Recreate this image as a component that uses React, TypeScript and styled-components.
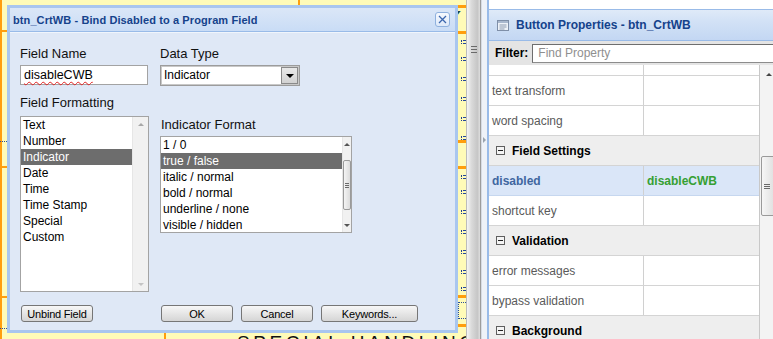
import React from 'react';
import styled, { createGlobalStyle } from 'styled-components';

const GlobalStyle = createGlobalStyle`
  html, body { margin: 0; padding: 0; }
  body { font-family: "Liberation Sans", Arial, sans-serif; background: #ffffff; }
  * { box-sizing: border-box; }
`;

const Screen = styled.div`
  display: flex;
  width: 773px;
  height: 339px;
  overflow: hidden;
`;

/* ---------- designer canvas behind the dialog ---------- */

const Canvas = styled.div`
  position: relative;
  flex: none;
  width: 466px;
  height: 339px;
  background: #fffbb8;
  overflow: hidden;
`;

const OrangeBar = styled.div<{ $x: number; $y: number; $w: number; $h: number }>`
  position: absolute;
  left: ${(p) => p.$x}px;
  top: ${(p) => p.$y}px;
  width: ${(p) => p.$w}px;
  height: ${(p) => p.$h}px;
  background: #ff9e0d;
`;

const DottedRule = styled.div<{ $x: number; $y: number; $w: number }>`
  position: absolute;
  left: ${(p) => p.$x}px;
  top: ${(p) => p.$y}px;
  width: ${(p) => p.$w}px;
  border-top: 1px dotted #2a4f9a;
`;

const GuideMark = styled.div<{ $y: number }>`
  position: absolute;
  left: 461px;
  top: ${(p) => p.$y}px;
  width: 5px;
  height: 4px;
  border-left: 1px dotted #1f3f90;
  &::before, &::after {
    content: '';
    position: absolute;
    left: 1px;
    width: 3px;
    height: 1px;
    background: #24469a;
  }
  &::before { top: 0; }
  &::after { top: 3px; }
`;

const GuideBox = styled.div`
  position: absolute;
  left: 458px;
  top: 302px;
  width: 8px;
  height: 17px;
  border: 1px dotted #2a4f9a;
  border-right: none;
`;

const CanvasLetter = styled.div`
  position: absolute;
  left: 448px;
  top: 8px;
  font: italic bold 17px "Liberation Sans", sans-serif;
  color: #17404a;
`;

const CaptionText = styled.div`
  position: absolute;
  left: 237px;
  top: 332px;
  font: 19px "Liberation Sans", sans-serif;
  letter-spacing: 3.6px;
  color: #111111;
  white-space: nowrap;
`;

/* ---------- dialog ---------- */

const Dialog = styled.div`
  position: absolute;
  left: 7px;
  top: 5px;
  width: 451px;
  height: 328px;
  z-index: 2;
  display: flex;
  flex-direction: column;
  border: 3px solid #a9c6ef;
  background: #dfe8f6;
`;

const TitleBar = styled.div`
  flex: none;
  height: 24px;
  display: flex;
  align-items: center;
  justify-content: space-between;
  padding: 0 5px 0 3px;
  background: linear-gradient(#dbe7f7, #c9dcf6);
  border-bottom: 1px solid #99bbe8;
  box-shadow: 0 1px 0 #f0f5fc;
`;

const TitleText = styled.span`
  font: bold 11px "Liberation Sans", Arial, sans-serif;
  letter-spacing: 0.1px;
  color: #15428b;
`;

const CloseButton = styled.div`
  width: 15px;
  height: 15px;
  display: flex;
  align-items: center;
  justify-content: center;
  border: 1px solid #8fb1de;
  border-radius: 3px;
  background: linear-gradient(#f6f9fe, #dde9f9);
`;

const DialogBody = styled.div`
  flex: 1;
  display: flex;
  flex-direction: column;
  padding: 14px 10px 0 10px;
`;

const Columns = styled.div`
  display: flex;
  gap: 11px;
`;

const Column = styled.div<{ $w?: number }>`
  display: flex;
  flex-direction: column;
  width: ${(p) => (p.$w ? `${p.$w}px` : 'auto')};
`;

const Label = styled.div<{ $mt?: number; $indent?: number }>`
  height: 15px;
  margin-top: ${(p) => p.$mt ?? 0}px;
  margin-bottom: 4px;
  padding-left: ${(p) => p.$indent ?? 0}px;
  font: 13px/15px "Liberation Sans", Arial, sans-serif;
  color: #111111;
`;

const TextInput = styled.div`
  width: 128px;
  height: 20px;
  padding: 0 3px;
  background: #ffffff;
  border: 1px solid #a3a3a3;
  font: 12.5px/18px "Liberation Sans", Arial, sans-serif;
  color: #000000;
`;

const Squiggle = styled.span`
  text-decoration: underline wavy #e02020;
  text-decoration-thickness: 1px;
  text-underline-offset: 2px;
`;

const SelectBox = styled.div`
  width: 140px;
  height: 21px;
  display: flex;
  align-items: stretch;
  background: #ffffff;
  border: 1px solid #9c9c9c;
  box-shadow: inset 0 0 0 1px #c8c8c8;
`;

const SelectValue = styled.div`
  flex: 1;
  padding: 0 3px;
  font: 12px/19px "Liberation Sans", Arial, sans-serif;
  color: #000000;
`;

const SelectArrow = styled.div`
  width: 17px;
  margin: 1px;
  display: flex;
  align-items: center;
  justify-content: center;
  background: linear-gradient(#e8e8e8, #d2d2d2);
  border: 1px solid #8a8a8a;
  &::after {
    content: '';
    border-left: 4px solid transparent;
    border-right: 4px solid transparent;
    border-top: 4px solid #000000;
  }
`;

const ListBox = styled.div<{ $w: number; $h: number; $mt: number }>`
  width: ${(p) => p.$w}px;
  height: ${(p) => p.$h}px;
  margin-top: ${(p) => p.$mt}px;
  display: flex;
  background: #ffffff;
  border: 1px solid #a3a3a3;
  overflow: hidden;
`;

const ListItems = styled.div`
  flex: 1;
  display: flex;
  flex-direction: column;
`;

const ListItem = styled.div<{ $selected?: boolean }>`
  flex: none;
  height: 16px;
  padding-left: 2px;
  font: 12px/16px "Liberation Sans", Arial, sans-serif;
  white-space: nowrap;
  color: ${(p) => (p.$selected ? '#ffffff' : '#000000')};
  background: ${(p) => (p.$selected ? '#6d6d6d' : 'transparent')};
`;

const ListScroll = styled.div<{ $w: number }>`
  flex: none;
  width: ${(p) => p.$w}px;
  display: flex;
  flex-direction: column;
  align-items: center;
  justify-content: space-between;
  padding: 6px 0 5px;
  background: #f1f1f1;
  border-left: 1px solid #e6e6e6;
`;

const ArrowUp = styled.div<{ $c?: string }>`
  border-left: 3px solid transparent;
  border-right: 3px solid transparent;
  border-bottom: 3px solid ${(p) => p.$c ?? '#a8a8a8'};
`;

const ArrowDown = styled.div<{ $c?: string }>`
  border-left: 3px solid transparent;
  border-right: 3px solid transparent;
  border-top: 3px solid ${(p) => p.$c ?? '#a8a8a8'};
`;

const ListThumb = styled.div`
  width: 8px;
  height: 50px;
  display: flex;
  flex-direction: column;
  justify-content: center;
  align-items: center;
  gap: 1px;
  border: 1px solid #9a9a9a;
  border-radius: 2px;
  background: linear-gradient(to right, #f4f4f4, #dcdcdc);
`;

const GripLine = styled.div<{ $w: number }>`
  width: ${(p) => p.$w}px;
  height: 1px;
  background: #6a6a6a;
`;

const ButtonRow = styled.div`
  display: flex;
  margin-top: 13px;
  padding-left: 1px;
`;

const ButtonGroup = styled.div`
  display: flex;
  gap: 8px;
  margin-left: 68px;
`;

const DialogButton = styled.div<{ $w: number }>`
  width: ${(p) => p.$w}px;
  height: 17px;
  display: flex;
  align-items: center;
  justify-content: center;
  border: 1px solid #767676;
  border-radius: 3px;
  background: linear-gradient(#f7f7f7, #e6e6e6 50%, #d5d5d5);
  font: 11px "Liberation Sans", Arial, sans-serif;
  letter-spacing: -0.2px;
  color: #000000;
`;

/* ---------- splitter ---------- */

const Splitter = styled.div`
  flex: none;
  width: 15px;
  display: flex;
  flex-direction: column;
  align-items: center;
  gap: 2px;
  padding-top: 46px;
  background: linear-gradient(to right, #f5f5f5, #dadada 35%, #c6c6c6 80%, #dedede);
  border-left: 1px solid #bcbcbc;
  border-right: 1px solid #9c9c9c;
`;

const CollapseStrip = styled.div`
  flex: none;
  width: 6px;
  padding-top: 137px;
  background: #eef2f8;
  border-left: 1px solid #d6dbe3;
  &::after {
    content: '';
    display: block;
    margin-left: 1px;
    border-top: 3px solid transparent;
    border-bottom: 3px solid transparent;
    border-left: 3px solid #9aa3ae;
  }
`;

/* ---------- properties panel ---------- */

const Panel = styled.div`
  flex: 1;
  display: flex;
  flex-direction: column;
  min-width: 0;
  border-left: 2px solid #99bbe8;
  background: #ffffff;
`;

const PanelTop = styled.div`
  flex: none;
  height: 10px;
  background: #ffffff;
  border-bottom: 1px solid #99bbe8;
`;

const PanelHeader = styled.div`
  flex: none;
  height: 31px;
  display: flex;
  align-items: center;
  gap: 7px;
  padding-left: 8px;
  background: linear-gradient(#dfeaf8, #d3e2f6 35%, #c3d7f3);
  border-bottom: 1px solid #99bbe8;
`;

const PanelTitle = styled.span`
  font: bold 12px "Liberation Sans", Arial, sans-serif;
  color: #15428b;
`;

const FilterBar = styled.div`
  flex: none;
  height: 24px;
  display: flex;
  align-items: center;
  gap: 4px;
  padding-left: 6px;
  background: #e4e4e4;
`;

const FilterLabel = styled.span`
  font: bold 12px "Liberation Sans", Arial, sans-serif;
  color: #000000;
`;

const FilterInput = styled.div`
  flex: 1;
  height: 19px;
  padding-left: 5px;
  background: #ffffff;
  border: 1px solid #8c8c8c;
  border-top-color: #6e6e6e;
  border-left-color: #6e6e6e;
  border-right: none;
  font: 12px/17px "Liberation Sans", Arial, sans-serif;
  color: #8f8f8f;
`;

const GridArea = styled.div`
  flex: 1;
  display: flex;
  min-height: 0;
  background: #f2f2f2;
`;

const Grid = styled.div`
  flex: none;
  width: 271px;
  display: flex;
  flex-direction: column;
  background: #ffffff;
  border-right: 1px solid #c8c8c8;
`;

const PropRow = styled.div<{ $h?: number; $active?: boolean }>`
  flex: none;
  height: ${(p) => p.$h ?? 30}px;
  display: grid;
  grid-template-columns: 155px 1fr;
  background: ${(p) => (p.$active ? '#dae6f8' : '#ffffff')};
  border-bottom: 1px solid ${(p) => (p.$active ? '#c6d7ef' : '#d4d4d4')};
`;

const PropName = styled.div<{ $active?: boolean }>`
  display: flex;
  align-items: center;
  padding-left: 3px;
  border-right: 1px solid #d0d0d0;
  font: ${(p) => (p.$active ? 'bold ' : '')}12px "Liberation Sans", Arial, sans-serif;
  color: ${(p) => (p.$active ? '#3f66a0' : '#5a5a5a')};
  white-space: nowrap;
`;

const PropValue = styled.div`
  display: flex;
  align-items: center;
  padding-left: 3px;
  font: bold 12px "Liberation Sans", Arial, sans-serif;
  color: #36a033;
`;

const GroupRow = styled.div`
  flex: none;
  height: 30px;
  display: flex;
  align-items: center;
  gap: 7px;
  padding-left: 7px;
  background: #eeeeee;
  border-bottom: 1px solid #d4d4d4;
  font: bold 12px "Liberation Sans", Arial, sans-serif;
  color: #000000;
`;

const GridScroll = styled.div`
  flex: none;
  width: 17px;
  display: flex;
  flex-direction: column;
  align-items: center;
  padding-top: 8px;
  background: #f3f3f3;
`;

const GridThumb = styled.div`
  width: 15px;
  height: 60px;
  margin-top: 80px;
  display: flex;
  flex-direction: column;
  align-items: flex-start;
  justify-content: center;
  gap: 1px;
  padding-left: 2px;
  border: 1px solid #9a9a9a;
  border-radius: 2px;
  background: linear-gradient(to right, #f6f6f6, #dedede);
`;

const MinusBox = () => (
  <svg width="9" height="9" viewBox="0 0 9 9">
    <rect x="0.5" y="0.5" width="8" height="8" fill="#f4f4f4" stroke="#5e5e5e" />
    <line x1="2" y1="4.5" x2="7" y2="4.5" stroke="#222" />
  </svg>
);

const PanelIcon = () => (
  <svg width="12" height="11" viewBox="0 0 12 11">
    <rect x="0.5" y="0.5" width="11" height="10" fill="#eef2f8" stroke="#7f8fa8" />
    <rect x="1" y="1" width="10" height="2" fill="#a9b8ce" />
    <line x1="2.5" y1="5" x2="9.5" y2="5" stroke="#8d9bb0" />
    <line x1="2.5" y1="7" x2="9.5" y2="7" stroke="#8d9bb0" />
    <line x1="2.5" y1="9" x2="7.5" y2="9" stroke="#8d9bb0" />
  </svg>
);

const CloseIcon = () => (
  <svg width="9" height="9" viewBox="0 0 9 9">
    <path d="M1 1 L8 8 M8 1 L1 8" stroke="#3c67ae" strokeWidth="1.3" />
  </svg>
);

const formats = ['Text', 'Number', 'Indicator', 'Date', 'Time', 'Time Stamp', 'Special', 'Custom'];
const indicatorFormats = ['1 / 0', 'true / false', 'italic / normal', 'bold / normal', 'underline / none', 'visible / hidden'];
const guideMarks = [40, 57, 77, 97, 117, 136, 175, 190, 210, 230, 250, 270, 287];

export default function App() {
  return (
    <>
      <GlobalStyle />
      <Screen>
        <Canvas>
          <OrangeBar $x={0} $y={0} $w={2} $h={339} />
          <OrangeBar $x={2} $y={30} $w={5} $h={2} />
          <OrangeBar $x={2} $y={166} $w={5} $h={2} />
          <OrangeBar $x={2} $y={296} $w={5} $h={2} />
          <OrangeBar $x={298} $y={0} $w={2} $h={5} />
          <OrangeBar $x={458} $y={5} $w={8} $h={3} />
          <OrangeBar $x={458} $y={31} $w={8} $h={3} />
          <OrangeBar $x={458} $y={140} $w={8} $h={3} />
          <OrangeBar $x={458} $y={166} $w={8} $h={3} />
          <OrangeBar $x={458} $y={295} $w={8} $h={3} />
          <OrangeBar $x={458} $y={324} $w={8} $h={3} />
          <OrangeBar $x={164} $y={333} $w={2} $h={6} />
          <DottedRule $x={0} $y={141} $w={7} />
          <DottedRule $x={0} $y={328} $w={7} />
          {guideMarks.map((y) => (
            <GuideMark key={y} $y={y} />
          ))}
          <GuideBox />
          <CanvasLetter>Y</CanvasLetter>
          <CaptionText>SPECIAL HANDLING</CaptionText>

          <Dialog>
            <TitleBar>
              <TitleText>btn_CrtWB - Bind Disabled to a Program Field</TitleText>
              <CloseButton>
                <CloseIcon />
              </CloseButton>
            </TitleBar>
            <DialogBody>
              <Columns>
                <Column $w={129}>
                  <Label>Field Name</Label>
                  <TextInput>
                    <Squiggle>disableCWB</Squiggle>
                  </TextInput>
                  <Label $mt={10}>Field Formatting</Label>
                  <ListBox $w={129} $h={176} $mt={2}>
                    <ListItems>
                      {formats.map((f) => (
                        <ListItem key={f} $selected={f === 'Indicator'}>
                          {f}
                        </ListItem>
                      ))}
                    </ListItems>
                    <ListScroll $w={16}>
                      <ArrowUp />
                      <ArrowDown $c="#c4c4c4" />
                    </ListScroll>
                  </ListBox>
                </Column>
                <Column>
                  <Label>Data Type</Label>
                  <SelectBox>
                    <SelectValue>Indicator</SelectValue>
                    <SelectArrow />
                  </SelectBox>
                  <Label $mt={31} $indent={1}>Indicator Format</Label>
                  <ListBox $w={192} $h={97} $mt={0}>
                    <ListItems>
                      {indicatorFormats.map((f) => (
                        <ListItem key={f} $selected={f === 'true / false'}>
                          {f}
                        </ListItem>
                      ))}
                    </ListItems>
                    <ListScroll $w={9}>
                      <ArrowUp $c="#555" />
                      <ListThumb>
                        <GripLine $w={4} />
                        <GripLine $w={4} />
                        <GripLine $w={4} />
                      </ListThumb>
                      <ArrowDown $c="#555" />
                    </ListScroll>
                  </ListBox>
                </Column>
              </Columns>
              <ButtonRow>
                <DialogButton $w={72}>Unbind Field</DialogButton>
                <ButtonGroup>
                  <DialogButton $w={72}>OK</DialogButton>
                  <DialogButton $w={72}>Cancel</DialogButton>
                  <DialogButton $w={97}>Keywords...</DialogButton>
                </ButtonGroup>
              </ButtonRow>
            </DialogBody>
          </Dialog>
        </Canvas>

        <Splitter>
          <GripLine $w={6} />
          <GripLine $w={6} />
          <GripLine $w={6} />
        </Splitter>
        <CollapseStrip />

        <Panel>
          <PanelTop />
          <PanelHeader>
            <PanelIcon />
            <PanelTitle>Button Properties - btn_CrtWB</PanelTitle>
          </PanelHeader>
          <FilterBar>
            <FilterLabel>Filter:</FilterLabel>
            <FilterInput>Find Property</FilterInput>
          </FilterBar>
          <GridArea>
            <Grid>
              <PropRow $h={11}>
                <PropName />
                <PropValue />
              </PropRow>
              <PropRow>
                <PropName>text transform</PropName>
                <PropValue />
              </PropRow>
              <PropRow>
                <PropName>word spacing</PropName>
                <PropValue />
              </PropRow>
              <GroupRow>
                <MinusBox />
                Field Settings
              </GroupRow>
              <PropRow $active>
                <PropName $active>disabled</PropName>
                <PropValue>disableCWB</PropValue>
              </PropRow>
              <PropRow>
                <PropName>shortcut key</PropName>
                <PropValue />
              </PropRow>
              <GroupRow>
                <MinusBox />
                Validation
              </GroupRow>
              <PropRow>
                <PropName>error messages</PropName>
                <PropValue />
              </PropRow>
              <PropRow>
                <PropName>bypass validation</PropName>
                <PropValue />
              </PropRow>
              <GroupRow>
                <MinusBox />
                Background
              </GroupRow>
            </Grid>
            <GridScroll>
              <ArrowUp $c="#444" />
              <GridThumb>
                <GripLine $w={6} />
                <GripLine $w={6} />
                <GripLine $w={6} />
              </GridThumb>
            </GridScroll>
          </GridArea>
        </Panel>
      </Screen>
    </>
  );
}
